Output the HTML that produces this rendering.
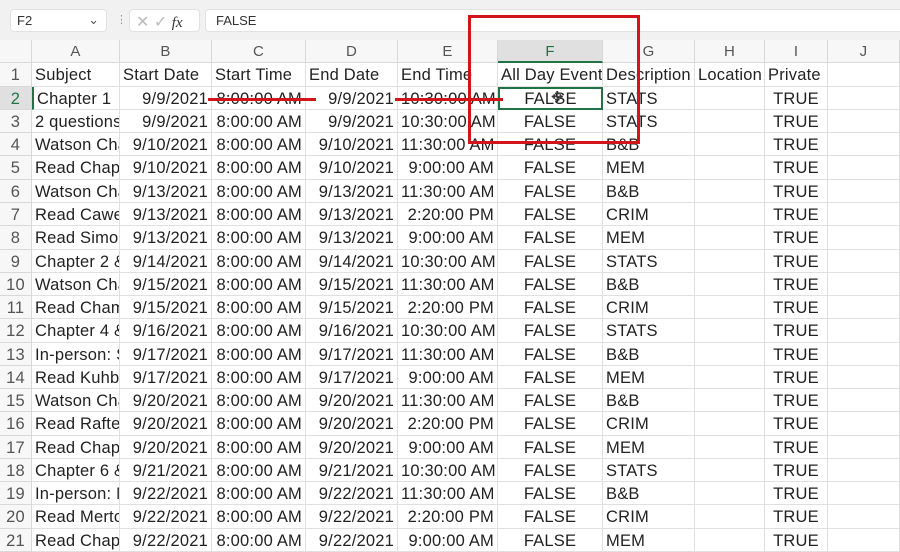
<!DOCTYPE html>
<html><head><meta charset="utf-8"><style>
*{margin:0;padding:0;box-sizing:border-box}
body{width:900px;height:546px;overflow:hidden;background:#fff;font-family:"Liberation Sans",sans-serif;position:relative}
.tb{position:absolute;left:0;top:0;width:900px;height:40px;background:#f1f1f1}
.box{position:absolute;background:#fff;border:1px solid #e2e2e2;border-radius:4px;font-size:13px;color:#333}
.grid{position:absolute;left:0;top:40px;display:grid;grid-template-columns:32px 88px 92px 94px 92px 100px 105px 92px 70px 63px 72px;grid-template-rows:23.4px repeat(21,23.28px)}
.grid div{border-right:1px solid #e0e0e0;border-bottom:1px solid #e0e0e0;font-size:16.5px;letter-spacing:0.2px;color:#222;white-space:nowrap;overflow:hidden;padding:0 3px;line-height:24px}
.h{background:#f7f7f7;color:#555!important;text-align:center;font-size:15px!important;border-color:#d8d8d8!important;line-height:23px!important}
.n{background:#f7f7f7;color:#555!important;text-align:center;border-color:#d8d8d8!important;padding:0!important}
.r{text-align:right}.c{text-align:center}
</style></head><body>
<div class="tb">
<div class="box" style="left:10px;top:9px;width:97px;height:23px;padding:3px 6px">F2<span style="position:absolute;right:7px;top:2px;color:#555">&#8964;</span></div>
<div style="position:absolute;left:116px;top:13px;color:#999;font-size:11px">&#8942;</div>
<div class="box" style="left:129px;top:9px;width:71px;height:23px;color:#bbb;padding:2px 6px;font-size:16px">&#10005; &#10003; <i style="color:#333;font-family:'Liberation Serif',serif;font-size:15px">fx</i></div>
<div class="box" style="left:205px;top:9px;width:700px;height:23px;padding:3px 10px">FALSE</div>
</div>
<div class="grid">
<div class="h"></div><div class="h">A</div><div class="h">B</div><div class="h">C</div><div class="h">D</div><div class="h">E</div><div class="h" style="background:#e0e0e0;border-bottom:2px solid #217346!important;color:#217346!important">F</div><div class="h">G</div><div class="h">H</div><div class="h">I</div><div class="h">J</div>
<div class="n">1</div><div>Subject</div><div>Start Date</div><div>Start Time</div><div>End Date</div><div>End Time</div><div>All Day Event</div><div>Description</div><div>Location</div><div>Private</div><div></div>
<div class="n" style="background:#e0e0e0;color:#217346!important">2</div><div style="border-left:2px solid #217346">Chapter 1</div><div class="r">9/9/2021</div><div class="r">8:00:00 AM</div><div class="r">9/9/2021</div><div class="r">10:30:00 AM</div><div class="c" style="border:2px solid #217346;line-height:20px">FALSE</div><div>STATS</div><div></div><div class="c">TRUE</div><div></div>
<div class="n">3</div><div>2 questions</div><div class="r">9/9/2021</div><div class="r">8:00:00 AM</div><div class="r">9/9/2021</div><div class="r">10:30:00 AM</div><div class="c">FALSE</div><div>STATS</div><div></div><div class="c">TRUE</div><div></div>
<div class="n">4</div><div>Watson Chapter</div><div class="r">9/10/2021</div><div class="r">8:00:00 AM</div><div class="r">9/10/2021</div><div class="r">11:30:00 AM</div><div class="c">FALSE</div><div>B&amp;B</div><div></div><div class="c">TRUE</div><div></div>
<div class="n">5</div><div>Read Chapter</div><div class="r">9/10/2021</div><div class="r">8:00:00 AM</div><div class="r">9/10/2021</div><div class="r">9:00:00 AM</div><div class="c">FALSE</div><div>MEM</div><div></div><div class="c">TRUE</div><div></div>
<div class="n">6</div><div>Watson Chapter</div><div class="r">9/13/2021</div><div class="r">8:00:00 AM</div><div class="r">9/13/2021</div><div class="r">11:30:00 AM</div><div class="c">FALSE</div><div>B&amp;B</div><div></div><div class="c">TRUE</div><div></div>
<div class="n">7</div><div>Read Cawelti</div><div class="r">9/13/2021</div><div class="r">8:00:00 AM</div><div class="r">9/13/2021</div><div class="r">2:20:00 PM</div><div class="c">FALSE</div><div>CRIM</div><div></div><div class="c">TRUE</div><div></div>
<div class="n">8</div><div>Read Simons</div><div class="r">9/13/2021</div><div class="r">8:00:00 AM</div><div class="r">9/13/2021</div><div class="r">9:00:00 AM</div><div class="c">FALSE</div><div>MEM</div><div></div><div class="c">TRUE</div><div></div>
<div class="n">9</div><div>Chapter 2 &amp; 3</div><div class="r">9/14/2021</div><div class="r">8:00:00 AM</div><div class="r">9/14/2021</div><div class="r">10:30:00 AM</div><div class="c">FALSE</div><div>STATS</div><div></div><div class="c">TRUE</div><div></div>
<div class="n">10</div><div>Watson Chapter</div><div class="r">9/15/2021</div><div class="r">8:00:00 AM</div><div class="r">9/15/2021</div><div class="r">11:30:00 AM</div><div class="c">FALSE</div><div>B&amp;B</div><div></div><div class="c">TRUE</div><div></div>
<div class="n">11</div><div>Read Chambliss</div><div class="r">9/15/2021</div><div class="r">8:00:00 AM</div><div class="r">9/15/2021</div><div class="r">2:20:00 PM</div><div class="c">FALSE</div><div>CRIM</div><div></div><div class="c">TRUE</div><div></div>
<div class="n">12</div><div>Chapter 4 &amp; 5</div><div class="r">9/16/2021</div><div class="r">8:00:00 AM</div><div class="r">9/16/2021</div><div class="r">10:30:00 AM</div><div class="c">FALSE</div><div>STATS</div><div></div><div class="c">TRUE</div><div></div>
<div class="n">13</div><div>In-person: Sess</div><div class="r">9/17/2021</div><div class="r">8:00:00 AM</div><div class="r">9/17/2021</div><div class="r">11:30:00 AM</div><div class="c">FALSE</div><div>B&amp;B</div><div></div><div class="c">TRUE</div><div></div>
<div class="n">14</div><div>Read Kuhbandner</div><div class="r">9/17/2021</div><div class="r">8:00:00 AM</div><div class="r">9/17/2021</div><div class="r">9:00:00 AM</div><div class="c">FALSE</div><div>MEM</div><div></div><div class="c">TRUE</div><div></div>
<div class="n">15</div><div>Watson Chapter</div><div class="r">9/20/2021</div><div class="r">8:00:00 AM</div><div class="r">9/20/2021</div><div class="r">11:30:00 AM</div><div class="c">FALSE</div><div>B&amp;B</div><div></div><div class="c">TRUE</div><div></div>
<div class="n">16</div><div>Read Rafter</div><div class="r">9/20/2021</div><div class="r">8:00:00 AM</div><div class="r">9/20/2021</div><div class="r">2:20:00 PM</div><div class="c">FALSE</div><div>CRIM</div><div></div><div class="c">TRUE</div><div></div>
<div class="n">17</div><div>Read Chapter</div><div class="r">9/20/2021</div><div class="r">8:00:00 AM</div><div class="r">9/20/2021</div><div class="r">9:00:00 AM</div><div class="c">FALSE</div><div>MEM</div><div></div><div class="c">TRUE</div><div></div>
<div class="n">18</div><div>Chapter 6 &amp; 7</div><div class="r">9/21/2021</div><div class="r">8:00:00 AM</div><div class="r">9/21/2021</div><div class="r">10:30:00 AM</div><div class="c">FALSE</div><div>STATS</div><div></div><div class="c">TRUE</div><div></div>
<div class="n">19</div><div>In-person: Meet</div><div class="r">9/22/2021</div><div class="r">8:00:00 AM</div><div class="r">9/22/2021</div><div class="r">11:30:00 AM</div><div class="c">FALSE</div><div>B&amp;B</div><div></div><div class="c">TRUE</div><div></div>
<div class="n">20</div><div>Read Merton</div><div class="r">9/22/2021</div><div class="r">8:00:00 AM</div><div class="r">9/22/2021</div><div class="r">2:20:00 PM</div><div class="c">FALSE</div><div>CRIM</div><div></div><div class="c">TRUE</div><div></div>
<div class="n">21</div><div>Read Chapter</div><div class="r">9/22/2021</div><div class="r">8:00:00 AM</div><div class="r">9/22/2021</div><div class="r">9:00:00 AM</div><div class="c">FALSE</div><div>MEM</div><div></div><div class="c">TRUE</div><div></div>
</div>
<div style="position:absolute;left:208px;top:98px;width:108px;height:3px;background:#d0161b"></div>
<div style="position:absolute;left:395px;top:98px;width:108px;height:3px;background:#d0161b"></div>
<div style="position:absolute;left:468px;top:15px;width:172px;height:129px;border:3px solid #d0161b"></div>
<div style="position:absolute;left:551px;top:88px;font-size:15px;color:#333">&#10021;</div>
</body></html>
